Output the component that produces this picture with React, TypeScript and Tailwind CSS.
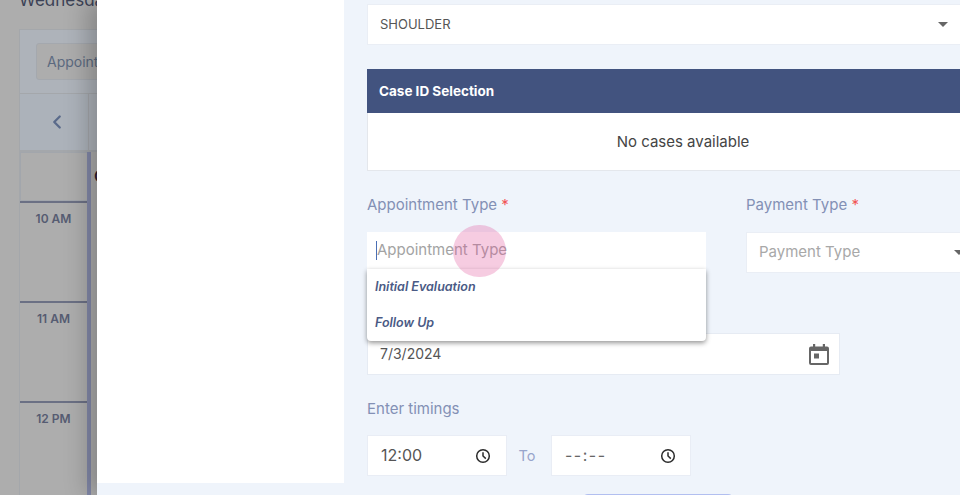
import { ChevronLeft } from 'lucide-react';

const font = "font-['Inter','Liberation_Sans',sans-serif]";

function ClockIcon() {
  return (
    <svg width="16" height="16" viewBox="0 0 16 16" fill="none" stroke="#2b2b2b" strokeWidth="1.5">
      <circle cx="8" cy="8" r="6.3" />
      <path d="M8 4.2V8l2.8 2.6" />
    </svg>
  );
}

function CalendarIcon() {
  return (
    <svg width="20" height="21" viewBox="0 0 20 21" fill="none">
      <path d="M4 0h2.2v2.5h7.6V0H16v2.5h2a2 2 0 0 1 2 2V19a2 2 0 0 1-2 2H2a2 2 0 0 1-2-2V4.5a2 2 0 0 1 2-2h2z" fill="#666" />
      <rect x="2" y="7" width="16" height="12" fill="#fff" />
      <rect x="5" y="9.5" width="5" height="5" fill="#666" />
    </svg>
  );
}

function Caret() {
  return <span className="w-0 h-0 border-x-[5px] border-x-transparent border-t-[5px] border-t-[#666]" />;
}

// The dimmed calendar page that sits behind the modal
function Backdrop() {
  return (
    <div className="w-[97px] h-[495px] shrink-0 overflow-hidden bg-[#adadad] pl-[19px]">
      <div className="w-[200px] h-[19px] -mt-[10px] text-[17px] leading-[20px] text-[#3c4256] whitespace-nowrap">
        Wednesday
      </div>
      <div className="w-[200px] mt-[20px] border border-[#a4a7ab]">
        <div className="h-[64px] bg-[#aeb3ba] pl-[16px] pt-[13px] border-b border-[#a4a7ab]">
          <div className="w-[150px] h-[37px] flex items-center pl-[10px] rounded-[3px] bg-[#adadad] border border-[#a4a8ae] text-[14px] text-[#5c6a80] whitespace-nowrap">
            Appointment
          </div>
        </div>
        <div className="flex h-[58px] border-b-2 border-[#a4a7ab]">
          <div className="w-[69px] shrink-0 flex items-center justify-center pl-[6px] bg-[#acb2ba] border-r border-[#a4a7ab]">
            <ChevronLeft size={22} strokeWidth={2.5} color="#5a6a8a" />
          </div>
          <div className="flex-1 bg-[#aeb3ba]" />
        </div>
        <div className="flex">
          <div className="w-[67px] shrink-0">
            <div className="h-[49px] border border-[#a2a6ac] mr-[-1px]" />
            {['10 AM', '11 AM', '12 PM'].map((t) => (
              <div key={t} className="h-[100px] border-t-2 border-[#6b7084] pt-[7px] text-center text-[12px] font-semibold text-[#565c72]">
                {t}
              </div>
            ))}
          </div>
          <div className="w-[4px] shrink-0 bg-[#8288a8]" />
          <div className="flex-1 text-[#2c2030] text-[16px] font-semibold pl-[3px] pt-[12px]">
            Calendar
          </div>
        </div>
      </div>
    </div>
  );
}

export default function App() {
  return (
    <div className={`${font} relative flex w-[960px] h-[495px] overflow-hidden bg-[#eff4fb]`}>
      <Backdrop />

      <div className="relative z-10 flex flex-1 items-start bg-[#eff4fb] shadow-[-10px_0_22px_rgba(0,0,0,0.22)]">
        {/* Left white panel */}
        <div className="w-[247px] h-[483px] shrink-0 bg-white" />

        {/* Form */}
        <div className="w-[640px] shrink-0 ml-[23px] pt-[4px]">
          <div className="flex items-center justify-between h-[41px] bg-white border border-[#eaeef5] pl-[12px] pr-[58px]">
            <span className="text-[13px] text-[#555]">SHOULDER</span>
            <Caret />
          </div>

          {/* Case ID */}
          <div className="mt-[24px]">
            <div className="flex items-center h-[44px] pl-[12px] bg-[#42537f] text-white text-[13.5px] font-bold">
              Case ID Selection
            </div>
            <div className="flex items-center justify-center w-[632px] h-[58px] pt-[2px] bg-white border border-t-0 border-[#e4e7ec] text-[15px] text-[#444]">
              No cases available
            </div>
          </div>

          {/* Type fields */}
          <div className="flex mt-[24px]">
            <div className="w-[379px] shrink-0">
              <div className="h-[20px] leading-[20px] text-[15px] text-[#8390b5]">
                Appointment Type <span className="text-[#f25555]">*</span>
              </div>
              <div className="relative mt-[17px] w-[339px]">
                <div className="flex items-center h-[37px] pl-[9px] bg-white">
                  <span className="w-px h-[19px] bg-[#4a6fb5]" />
                  <span className="text-[15px] text-[#a3a3a3]">Appointment Type</span>
                </div>
                <div className="absolute left-0 top-[37px] z-10 w-[339px] h-[72px] bg-white rounded-b-[4px] shadow-[0_2px_5px_rgba(0,0,0,0.42)] text-[12.5px] font-semibold italic text-[#4a5a85]">
                  <div className="h-[36px] flex items-center pl-[8px]">Initial Evaluation</div>
                  <div className="h-[36px] flex items-center pl-[8px]">Follow Up</div>
                </div>
              </div>
            </div>
            <div className="flex-1">
              <div className="h-[20px] leading-[20px] text-[15px] text-[#8390b5] whitespace-nowrap">
                Payment Type <span className="text-[#f25555]">*</span>
              </div>
              <div className="flex items-center justify-between h-[41px] mt-[17px] pl-[12px] pr-[12px] w-[231px] bg-white border border-[#eaeef5] text-[15px] text-[#a8a8a8]">
                Payment Type
                <Caret />
              </div>
            </div>
          </div>

          {/* Date */}
          <div className="flex items-center justify-between w-[473px] h-[42px] mt-[60px] pl-[12px] pr-[10px] bg-white border border-[#e6ebf3] text-[14px] text-[#555]">
            <span className="pb-[2px]">7/3/2024</span>
            <CalendarIcon />
          </div>

          {/* Timings */}
          <div className="h-[20px] leading-[20px] mt-[24px] text-[15px] text-[#8390b5]">Enter timings</div>
          <div className="flex items-center mt-[16px]">
            <div className="flex items-center justify-between w-[140px] h-[41px] pl-[13px] pr-[15px] bg-white border border-[#e9edf5] text-[16px] text-[#555]">
              <span className="pb-[2px]">12:00</span>
              <ClockIcon />
            </div>
            <span className="w-[44px] pr-[4px] text-center text-[14.5px] text-[#98a5cc]">To</span>
            <div className="flex items-center justify-between w-[140px] h-[41px] pl-[13px] pr-[14px] bg-white border border-[#e9edf5] text-[16px] tracking-[1.5px] text-[#666]">
              <span className="pb-[2px]">--:--</span>
              <ClockIcon />
            </div>
          </div>
          <div className="w-[152px] h-[10px] ml-[215px] mt-[18px] rounded-t-[6px] bg-[#b2bff0]" />
        </div>
      </div>

      {/* Pointer highlight */}
      <div className="absolute left-[453px] top-[225px] z-20 w-[53px] h-[52px] rounded-full bg-[#e0559a]/30" />
    </div>
  );
}
